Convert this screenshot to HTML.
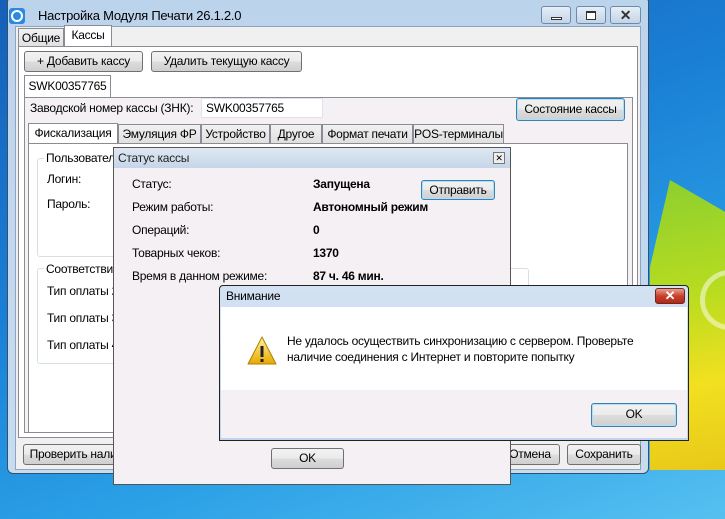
<!DOCTYPE html>
<html><head><meta charset="utf-8"><style>
*{margin:0;padding:0;box-sizing:border-box}
body{width:725px;height:519px;overflow:hidden;position:relative;font-family:"Liberation Sans",sans-serif;font-size:12px;color:#000;letter-spacing:-0.25px;
background:linear-gradient(160deg,#1560b8 0%,#1a7fd4 40%,#2a9fe6 70%,#56c0f0 100%)}
.a{position:absolute}
.btn{position:absolute;border:1px solid #707070;border-radius:3px;background:linear-gradient(#f2f2f2,#ebebeb 50%,#dddddd 51%,#cfcfcf);text-align:center;line-height:18px;white-space:nowrap}
.btn.f{border-color:#3c7fb1;box-shadow:inset 0 0 0 1px #a8e0f8}
.tab{position:absolute;border:1px solid #898c95;border-bottom:none;background:linear-gradient(#f2f2f2,#e0e0e0);text-align:center;line-height:18px;white-space:nowrap}
.tab.s{background:#fff}
.t{position:absolute;white-space:nowrap}
b{font-weight:bold}
</style></head><body>
<div class="a" style="left:650px;top:180px;width:80px;height:290px;background:linear-gradient(170deg,#8ccf2e 0%,#b8dc20 40%,#f2e020 70%,#e8c818 100%);clip-path:polygon(25% 0,100% 12%,100% 100%,0 100%,0 30%)"></div>
<div class="a" style="left:700px;top:270px;width:60px;height:60px;border-radius:50%;border:5px solid rgba(255,255,255,.5)"></div>
<div class="a" style="left:7px;top:-4px;width:642px;height:478px;background:linear-gradient(#bcd3ec,#c8dcf0);border:1px solid #34506e;border-radius:6px"></div>
<div class="a" style="left:9px;top:8px;width:16px;height:16px;border-radius:3px;background:#2b8ae0"></div>
<div class="a" style="left:11px;top:10px;width:12px;height:12px;border-radius:50%;border:2px solid #fff"></div>
<div class="t" style="left:38px;top:8px;font-size:13px;color:#000">Настройка Модуля Печати 26.1.2.0</div>
<div class="a" style="left:541px;top:6px;width:30px;height:18px;border:1px solid #6d8aa8;border-radius:3px;background:linear-gradient(#e6eef7,#c4d4e6)"><div class="a" style="left:9px;top:10px;width:11px;height:3px;border:1px solid #333;background:#fff"></div></div>
<div class="a" style="left:576px;top:6px;width:30px;height:18px;border:1px solid #6d8aa8;border-radius:3px;background:linear-gradient(#e6eef7,#c4d4e6)"><div class="a" style="left:9px;top:4px;width:10px;height:9px;border:1px solid #333;border-top-width:2px;background:#fff"></div></div>
<div class="a" style="left:610px;top:6px;width:31px;height:18px;border:1px solid #6d8aa8;border-radius:3px;background:linear-gradient(#e6eef7,#c4d4e6);text-align:center;font-weight:bold;font-size:14px;line-height:16px;color:#333">✕</div>
<div class="a" style="left:15px;top:26px;width:626px;height:444px;background:#f0f0f0;border:1px solid #8ea3bc"></div>
<div class="tab" style="left:18px;top:28px;width:46px;height:19px">Общие</div>
<div class="tab s" style="left:64px;top:25px;width:48px;height:23px">Кассы</div>
<div class="a" style="left:18px;top:46px;width:620px;height:392px;border:1px solid #898c95;background:#fff"></div>
<div class="btn" style="left:24px;top:51px;width:119px;height:21px">+ Добавить кассу</div>
<div class="btn" style="left:151px;top:51px;width:151px;height:21px">Удалить текущую кассу</div>
<div class="tab s" style="left:24px;top:75px;width:87px;height:23px;line-height:20px">SWK00357765</div>
<div class="a" style="left:24px;top:97px;width:609px;height:336px;border:1px solid #898c95;background:#f4f0f4"></div>
<div class="t" style="left:30px;top:101px">Заводской номер кассы (ЗНК):</div>
<div class="a" style="left:201px;top:98px;width:122px;height:20px;background:#fff;border:1px solid #e2e3ea"></div>
<div class="t" style="left:206px;top:101px">SWK00357765</div>
<div class="btn f" style="left:516px;top:98px;width:109px;height:23px;line-height:20px">Состояние кассы</div>
<div class="tab s" style="left:28px;top:123px;width:90px;height:21px">Фискализация</div>
<div class="tab" style="left:118px;top:124px;width:83px;height:19px">Эмуляция ФР</div>
<div class="tab" style="left:201px;top:124px;width:69px;height:19px">Устройство</div>
<div class="tab" style="left:270px;top:124px;width:52px;height:19px">Другое</div>
<div class="tab" style="left:322px;top:124px;width:91px;height:19px">Формат печати</div>
<div class="tab" style="left:413px;top:124px;width:91px;height:19px">POS-терминалы</div>
<div class="a" style="left:28px;top:143px;width:600px;height:290px;border:1px solid #898c95;background:#fff"></div>
<div class="a" style="left:37px;top:158px;width:200px;height:99px;border:1px solid #d5dfe5;border-radius:3px"></div>
<div class="t" style="left:44px;top:151px;background:#fff;padding-left:2px">Пользовател</div>
<div class="t" style="left:47px;top:172px">Логин:</div>
<div class="t" style="left:47px;top:197px">Пароль:</div>
<div class="a" style="left:37px;top:268px;width:492px;height:96px;border:1px solid #d5dfe5;border-radius:3px"></div>
<div class="t" style="left:44px;top:262px;background:#fff;padding-left:2px">Соответствие</div>
<div class="t" style="left:47px;top:284px">Тип оплаты 2</div>
<div class="t" style="left:47px;top:311px">Тип оплаты 3</div>
<div class="t" style="left:47px;top:338px">Тип оплаты 4</div>
<div class="btn" style="left:23px;top:444px;width:100px;height:21px">Проверить нали</div>
<div class="btn" style="left:500px;top:444px;width:60px;height:21px">Отмена</div>
<div class="btn" style="left:567px;top:444px;width:74px;height:21px">Сохранить</div>
<div class="a" style="left:113px;top:147px;width:398px;height:338px;border:1px solid #555;background:#f4f0f4"></div>
<div class="a" style="left:114px;top:148px;width:396px;height:20px;background:linear-gradient(#dfe8f3,#c5d5e8)"></div>
<div class="t" style="left:118px;top:151px;color:#222">Статус кассы</div>
<div class="a" style="left:493px;top:152px;width:12px;height:12px;border:1px solid #777;font-size:9px;line-height:10px;text-align:center;background:#eee">✕</div>
<div class="t" style="left:132px;top:177px">Статус:</div><div class="t" style="left:313px;top:177px"><b>Запущена</b></div>
<div class="t" style="left:132px;top:200px">Режим работы:</div><div class="t" style="left:313px;top:200px"><b>Автономный режим</b></div>
<div class="t" style="left:132px;top:223px">Операций:</div><div class="t" style="left:313px;top:223px"><b>0</b></div>
<div class="t" style="left:132px;top:246px">Товарных чеков:</div><div class="t" style="left:313px;top:246px"><b>1370</b></div>
<div class="t" style="left:132px;top:269px">Время в данном режиме:</div><div class="t" style="left:313px;top:269px"><b>87 ч. 46 мин.</b></div>
<div class="btn f" style="left:421px;top:180px;width:74px;height:20px">Отправить</div>
<div class="btn" style="left:271px;top:448px;width:73px;height:21px">OK</div>
<div class="a" style="left:219px;top:285px;width:470px;height:156px;border:1px solid #222;border-radius:4px 4px 0 0;background:linear-gradient(#d3e2f3,#bfd4ec)"></div>
<div class="t" style="left:226px;top:289px">Внимание</div>
<div class="a" style="left:655px;top:288px;width:30px;height:16px;border:1px solid #6b2a20;border-radius:3px;background:linear-gradient(#e8a090,#c8402c 50%,#b02818);color:#fff;font-weight:bold;text-align:center;line-height:14px;font-size:13px">✕</div>
<div class="a" style="left:221px;top:307px;width:466px;height:83px;background:#fff"></div>
<div class="a" style="left:221px;top:390px;width:466px;height:48px;background:#f4f0f4"></div>
<svg class="a" style="left:246px;top:335px" width="32" height="32" viewBox="0 0 32 32"><defs><linearGradient id="g" x1="0" y1="0" x2="0" y2="1"><stop offset="0" stop-color="#fff3a0"/><stop offset="1" stop-color="#e8a800"/></linearGradient></defs><path d="M16 2 L30 29 L2 29 Z" fill="url(#g)" stroke="#b08000" stroke-linejoin="round"/><rect x="14.5" y="11" width="3" height="11" fill="#222"/><rect x="14.5" y="24" width="3" height="3" fill="#222"/></svg>
<div class="t" style="left:287px;top:333px;line-height:16px">Не удалось осуществить синхронизацию с сервером. Проверьте<br>наличие соединения с Интернет и повторите попытку</div>
<div class="btn f" style="left:591px;top:403px;width:86px;height:24px;line-height:21px">OK</div>
</body></html>
